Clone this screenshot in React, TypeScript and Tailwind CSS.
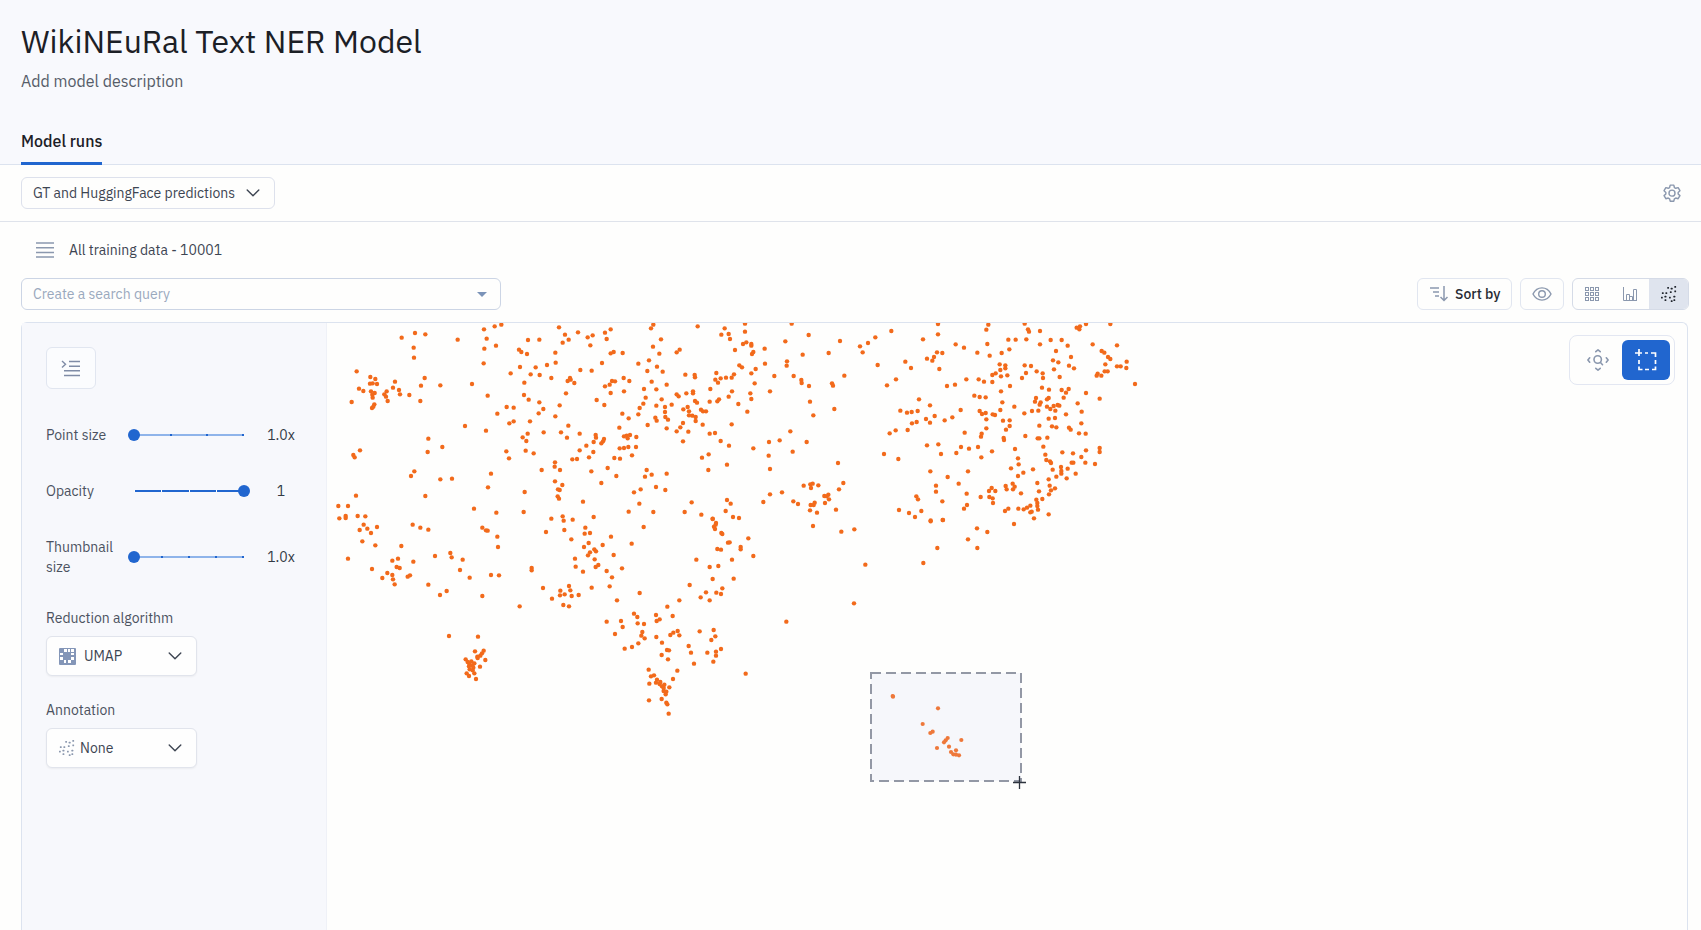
import { useState } from "react";
import type { ReactNode } from "react";

type Tile = { x: number; y: number; pts: number[][] };

// embedding points, stored per tile. one unit in pts is a third of a pixel
const tiles: Tile[] = [
  {
    x: 308, y: -3,
    pts: [
      [215,53],[255,39],[286,43],[383,59],[251,83],[252,113],[462,28],[494,19],[514,14],[470,56],[498,77],[463,86],[461,130],[594,60],[628,59],[687,22],[705,44],[698,68],[716,59],[744,37],[773,52],[788,46],[781,76],[567,89],[574,96],[591,102],[676,98],[677,128],[651,135],[570,141],[617,142],[542,160],[602,163],[629,165],[664,174],[751,150],[785,152],[720,174],[713,183],[722,179],[733,189],[583,188],[708,220],[582,225],[596,239],[628,247],[689,256],[800,240],
      [80,154],[121,171],[136,177],[120,191],[128,190],[141,192],[87,206],[100,213],[123,214],[134,219],[127,224],[128,233],[65,246],[133,253],[126,264],[130,260],[195,185],[189,203],[207,210],[170,214],[163,223],[168,230],[173,243],[210,223],[238,225],[284,174],[273,197],[331,196],[271,243],[426,192],[473,227],
      [530,261],[551,263],[502,281],[640,267],[626,280],[538,310],[551,304],[600,304],[676,289],[405,318],[468,332],[593,341],[578,352],[589,363],[641,337],[693,337],[715,317],[711,353],[749,341],[797,345],[798,353],[791,366],[769,377],[749,391],[790,396],[777,412],[727,418],[741,417],[529,394],[537,415],[587,392],[611,400],[295,356],[337,381],[293,396],[90,391],[70,405],[74,412],[253,454],[243,468],[331,478],[366,476],[483,461],[474,502],[635,450],[675,427],[674,440],[690,450],[675,484],[697,495],[684,508],[689,510],[683,529],[687,536],[784,454],[759,545],[584,516],[581,576],[432,566],[499,578],[78,527],[286,528],[25,558],[54,558],[28,595],[47,588],[47,594],[83,588],[106,589],[664,596],[698,589],[701,602],[728,599],[791,591],
    ],
  },
  {
    x: 578, y: -3,
    pts: [
      [15,38],[32,28],[20,57],[41,96],[32,100],[68,99],[6,129],[160,14],[153,25],[183,58],[159,80],[178,101],[147,121],[115,131],[142,153],[171,140],[188,155],[293,19],[374,25],[364,44],[386,42],[390,57],[435,11],[435,35],[575,11],[626,45],[556,64],[720,63],[804,69],[780,79],[788,97],[686,99],[608,104],[239,89],[230,97],[405,90],[429,72],[439,67],[454,72],[454,77],[460,96],[456,102],[494,86],[495,131],[561,124],[560,137],[418,136],[426,142],[467,147],[454,160],[464,190],[523,168],[581,168],[604,180],[605,189],[627,198],[733,167],[696,190],[699,197],[256,164],[284,165],[285,172],[349,159],[346,179],[354,188],[362,175],[378,173],[395,173],[402,163],
      [71,174],[88,183],[36,183],[45,184],[29,194],[15,199],[32,219],[72,214],[13,255],[155,185],[200,194],[132,207],[169,208],[137,233],[130,251],[119,264],[115,283],[67,281],[86,295],[58,323],[169,257],[185,238],[215,254],[195,261],[195,276],[196,291],[204,299],[166,293],[170,302],[143,315],[200,325],[230,223],[236,229],[259,220],[279,214],[279,220],[331,207],[396,214],[386,230],[357,238],[352,244],[329,245],[285,243],[291,248],[263,261],[250,268],[267,274],[267,286],[277,287],[287,291],[287,303],[303,269],[309,274],[318,274],[249,309],[241,322],[230,334],[265,335],[308,314],[329,341],[345,339],[395,313],[249,364],[362,363],[387,377],[415,252],[442,275],[451,220],[454,237],[510,214],[630,245],[703,267],[640,286],[571,334],[539,361],[507,366],[506,407],[460,385],[620,366],[578,395],[510,447],
      [12,357],[9,364],[4,370],[72,349],[80,347],[90,345],[83,355],[109,351],[59,385],[72,384],[85,381],[108,381],[96,406],[43,414],[60,416],[23,444],[49,468],[4,489],[140,450],[155,464],[135,470],[200,461],[196,510],[168,501],[122,508],[102,517],[118,551],[86,575],[160,576],[254,576],[275,547],[304,584],[338,596],[306,413],[326,403],[381,434],[325,450],[381,540],[392,551],[377,573],[399,591],[417,594],[490,546],[510,523],[546,517],[580,544],[594,552],[611,497],[631,493],[638,491],[633,504],[655,496],[714,429],[730,489],[717,508],[685,524],[673,528],[680,529],[687,538],[675,549],[644,548],[632,555],[641,555],[630,571],[651,578],[708,569],
    ],
  },
  {
    x: 848, y: -3,
    pts: [
      [16,52],[64,33],[23,135],[51,196],[78,178],[106,125],[123,144],[159,58],[204,12],[204,43],[201,97],[217,99],[192,111],[171,116],[187,122],[208,147],[257,73],[282,83],[322,98],[355,14],[349,29],[352,72],[359,107],[395,99],[418,88],[415,59],[437,59],[469,58],[464,11],[474,28],[477,35],[510,33],[510,73],[542,60],[575,60],[593,77],[558,93],[603,111],[549,121],[565,127],[597,137],[612,145],[552,148],[569,171],[648,12],[630,19],[620,23],[628,28],[721,12],[668,73],[741,76],[695,93],[703,98],[714,111],[721,117],[706,133],[741,139],[752,139],[770,125],[769,144],[704,154],[713,154],[683,161],[680,167],[694,167],[795,192],[689,236],
      [389,133],[406,136],[391,150],[406,145],[377,160],[367,165],[393,169],[412,166],[367,186],[342,185],[326,178],[289,178],[255,194],[231,198],[420,198],[393,214],[313,227],[329,231],[347,232],[397,247],[433,260],[391,270],[464,136],[483,138],[468,159],[456,174],[500,154],[518,160],[519,174],[516,203],[537,209],[575,210],[596,207],[588,218],[581,233],[648,219],[623,250],[635,275],[634,310],[627,340],[647,341],[498,234],[495,245],[512,247],[509,254],[536,234],[531,238],[531,260],[541,267],[551,258],[563,255],[568,257],[556,272],[505,272],[486,273],[463,280],[588,283],[555,294],[536,296],[508,317],[546,319],[559,322],[597,323],[602,329],[503,355],[508,355],[532,353],[466,348],
      [147,238],[180,256],[91,272],[111,278],[125,276],[143,273],[194,288],[168,297],[180,308],[140,306],[126,310],[113,330],[77,331],[59,340],[224,301],[247,292],[272,270],[329,273],[336,282],[347,279],[349,298],[368,283],[375,285],[399,302],[419,301],[419,318],[408,329],[349,325],[335,341],[333,350],[284,338],[401,354],[402,360],[42,402],[85,417],[171,376],[205,373],[213,402],[259,399],[273,381],[297,386],[324,381],[366,394],[334,412],[435,387],[444,415],[446,433],[423,445],[460,458],[444,468],[489,448],[520,380],[526,404],[529,420],[540,424],[543,429],[577,397],[609,400],[648,391],[689,384],[689,396],[634,411],[646,428],[675,432],[605,428],[610,428],[593,446],[617,461],[590,475],[573,441],[574,453],[574,461],[559,470],[548,449],[536,478],[502,489],[539,497],[555,505],[543,511],[537,523],[507,514],[453,520],[428,491],[434,500],[429,508],[407,498],[410,508],[365,504],[357,513],[376,513],[332,531],[358,531],[368,535],[369,549],[290,521],[266,491],[233,471],[181,454],[294,454],[198,497],[198,515],[139,529],[144,538],[217,544],[154,573],[87,570],[117,579],[135,591],[291,555],[282,566],[405,573],[415,566],[445,566],[461,568],[471,563],[481,557],[499,539],[517,537],[502,549],[502,558],[504,569],[481,577],[485,575],[492,595],[536,583],[182,601],[218,600],
    ],
  },
  {
    x: 308, y: 187,
    pts: [
      [101,44],[89,60],[112,56],[141,51],[123,69],[97,94],[136,106],[214,108],[248,44],[271,53],[295,59],[457,53],[468,61],[473,62],[502,80],[504,111],[54,146],[126,177],[187,152],[204,146],[200,171],[209,174],[172,189],[187,195],[189,208],[157,204],[194,223],[250,155],[240,196],[233,200],[295,224],[315,138],[361,129],[365,142],[398,149],[390,180],[419,203],[350,243],[330,255],[483,195],[507,196],[457,258],[569,289],[605,174],[605,181],[639,234],[666,266],[648,66],[703,60],[724,88],[766,53],[764,71],[780,69],[776,99],[762,111],[793,118],[798,124],[780,127],[774,136],[794,148],[735,146],[737,170],[759,185],[797,171],[805,165],[785,233],[717,228],[721,241],[691,242],[690,256],[704,253],[725,258],[746,255],[700,285],[717,289],[357,378],[444,380],
      [461,422],[435,424],[456,430],[451,437],[442,440],[443,444],[466,450],[407,448],[413,456],[424,454],[433,460],[418,462],[427,466],[417,469],[430,473],[450,470],[419,478],[428,481],[410,490],[433,490],[417,498],[438,507],
    ],
  },
  {
    x: 578, y: 187,
    pts: [
      [131,51],[33,80],[8,105],[95,101],[41,135],[20,183],[66,175],[36,202],[29,229],[51,271],[119,249],[338,27],[348,39],[347,44],[342,50],[345,57],[364,69],[367,72],[384,98],[389,97],[352,117],[363,119],[445,85],[422,111],[422,118],[460,138],[396,149],[289,149],[355,168],[329,171],[338,207],[401,206],[269,225],[318,247],[349,248],[367,235],[363,252],[302,262],[329,271],[238,271],[202,290],[102,311],[112,321],[168,315],[179,328],[170,333],[218,318],[20,335],[63,333],[113,340],[132,342],[68,351],[45,372],[127,366],[124,377],[134,385],[115,400],[96,411],[74,416],[169,381],[186,398],[233,363],[220,368],[211,375],[238,376],[299,364],[341,360],[346,379],[334,390],[266,408],[273,428],[322,428],[348,425],[348,437],[363,417],[340,455],[282,461],[201,420],[207,421],[185,435],[204,448],[146,479],[162,496],[153,499],[148,521],[171,509],[168,518],[181,516],[179,522],[193,524],[186,529],[191,534],[208,532],[191,543],[199,545],[197,553],[232,482],[219,507],[185,567],[147,571],[199,578],[202,583],[206,611],[437,491],[559,335],[639,48],[724,65],[763,58],[796,164],[762,280],
    ],
  },
  {
    x: 828, y: 177,
    pts: [[242,64],[279,60],[381,85],[412,96],[354,118],[382,144],[262,144],[220,189],[492,72]],
  },
];

const selectedPts = [[128,588],[129,590],[264,625],[218,672],[248,695],[241,699],[293,714],[287,721],[282,727],[334,720],[297,740],[261,744],[318,751],[303,756],[310,763],[318,764],[327,766]];

const dotGrid = [[8,2],[12,3],[16,1],[11,7],[16,6],[2,8],[6,8],[1,13],[5,12],[10,13],[15,12],[5,16],[12,17],[15,16]];

function Dots({ className }: { className: string }) {
  return (
    <svg width="16" height="16" viewBox="0 0 18 18" className={className} fill="currentColor">
      {dotGrid.map(([x, y], i) => (
        <rect key={i} x={x - 1} y={y - 1} width="2" height="2" rx="0.4" />
      ))}
    </svg>
  );
}

function Chevron() {
  return (
    <svg width="14" height="8" viewBox="0 0 14 8" fill="none" stroke="#3d4552" strokeWidth="1.4" strokeLinecap="round" strokeLinejoin="round">
      <path d="M1.2 1 7 6.8 12.8 1" />
    </svg>
  );
}

type SliderProps = {
  id: string;
  label: string;
  value: number;
  min: number;
  max: number;
  steps: number;
  text: string;
  filled?: boolean;
  onChange: (v: number) => void;
};

function Slider({ id, label, value, min, max, steps, text, filled, onChange }: SliderProps) {
  return (
    <div className="flex items-center">
      <label htmlFor={id} className="w-[82px] pr-2 leading-5">{label}</label>
      <div className="grid w-[122px] items-center">
        <div className={filled ? "mx-1.5 flex h-0.5 justify-between bg-[#2166cf] [grid-area:1/1]" : "mx-1.5 flex h-0.5 justify-between bg-[#8fb4ea] [grid-area:1/1]"}>
          {Array.from({ length: steps + 1 }, (_, i) => (
            <span key={i} className={filled ? "h-0.5 w-px bg-white" : "h-0.5 w-0.5 bg-[#2166cf]"} />
          ))}
        </div>
        <input
          id={id}
          type="range"
          min={min}
          max={max}
          step="any"
          value={value}
          onChange={(e) => onChange(Number(e.target.value))}
          className="h-3 w-full cursor-pointer appearance-none bg-transparent [grid-area:1/1] [&::-webkit-slider-thumb]:h-3 [&::-webkit-slider-thumb]:w-3 [&::-webkit-slider-thumb]:appearance-none [&::-webkit-slider-thumb]:rounded-full [&::-webkit-slider-thumb]:bg-[#2166cf]"
        />
      </div>
      <output htmlFor={id} className="w-[62px] text-center text-[#333a45]">{text}</output>
    </div>
  );
}

function PanelSelect({ id, label, icon, options, pad }: { id: string; label: string; icon: ReactNode; options: string[]; pad: string }) {
  return (
    <div>
      <label htmlFor={id} className="block leading-5">{label}</label>
      <div className="mt-2 grid h-10 w-[151px] items-center rounded-md border border-[#e1e4ec] bg-[#fefefe] shadow-xs">
        <select id={id} className={`h-full w-full appearance-none bg-transparent text-[#3d4552] outline-none [grid-area:1/1] ${pad}`}>
          {options.map((o) => <option key={o}>{o}</option>)}
        </select>
        <span className="pointer-events-none flex items-center justify-between pr-[14px] pl-3 [grid-area:1/1]">
          {icon}
          <Chevron />
        </span>
      </div>
    </div>
  );
}

function Scatter() {
  return (
    <svg className="absolute inset-0 h-full w-full" aria-label="Embedding projection">
      <g fill="#f26a1b">
        {tiles.map((t) =>
          t.pts.map(([x, y], i) => (
            <circle key={`${t.x}-${t.y}-${i}`} cx={t.x + x / 3} cy={t.y + y / 3} r="2.2" />
          ))
        )}
      </g>
      <rect x="849" y="350" width="150" height="108" fill="#f6f7fb" stroke="#9398a5" strokeWidth="2" strokeDasharray="10 5" />
      <g fill="#ee783a">
        {selectedPts.map(([x, y], i) => (
          <circle key={i} cx={828 + x / 3} cy={177 + y / 3} r="2.1" />
        ))}
      </g>
      <path d="M991 459.5h13M997.5 453v13" stroke="#2d333d" strokeWidth="1.3" />
    </svg>
  );
}

export default function App() {
  const [pointSize, setPointSize] = useState(1);
  const [opacity, setOpacity] = useState(1);
  const [thumbSize, setThumbSize] = useState(1);

  return (
    <div className="flex min-h-screen flex-col bg-[#fefefd] font-['IBM_Plex_Sans','Noto_Sans',sans-serif] text-sm text-[#4b5260]">
      <header className="border-b border-[#dce3ef] bg-[#f8f9fd] px-[21px] pt-[21px]">
        <h1 className="text-[32px] leading-10 text-[#1c2026]">WikiNEuRal Text NER Model</h1>
        <p className="mt-2 text-base leading-6 text-[#565d69]">Add model description</p>
        <nav className="mt-9 flex">
          <a href="#runs" className="-mb-px border-b-3 border-[#2166cf] pb-[9px] text-base leading-6 font-medium text-[#1c2026]">Model runs</a>
        </nav>
      </header>

      <div className="flex items-center justify-between border-b border-[#dfe3eb] py-3 pr-[19px] pl-[21px]">
        <div className="grid h-8 items-center rounded-md border border-[#dde1ec]">
          <select aria-label="Model run" className="h-full w-[252px] appearance-none bg-transparent pl-[11px] text-[#3d4552] outline-none [grid-area:1/1]">
            <option>GT and HuggingFace predictions</option>
          </select>
          <span className="pointer-events-none justify-self-end pr-[14px] [grid-area:1/1]"><Chevron /></span>
        </div>
        <button aria-label="Settings" className="p-px">
          <svg width="18" height="18" viewBox="0 0 24 24" fill="none" stroke="#8b98ae" strokeWidth="1.9" strokeLinejoin="round">
            <path d="M9.6 1.5h4.8l.8 3.2 1.8 1 3.2-.9 2.4 4.1-2.4 2.3v2l2.4 2.3-2.4 4.1-3.2-.9-1.8 1-.8 3.2H9.6l-.8-3.2-1.8-1-3.2.9-2.4-4.1 2.4-2.3v-2L1.4 8.900l2.4-4.100 3.2.9 1.8-1z" />
            <circle cx="12" cy="12.2" r="4" />
          </svg>
        </button>
      </div>

      <div className="flex items-center gap-[15px] px-9 pt-[18px]">
        <svg width="18" height="16" viewBox="0 0 18 16" stroke="#8b98ae" strokeWidth="1.5">
          <path d="M0 1h18M0 5.700h18M0 10.400h18M0 15h18" />
        </svg>
        <span className="leading-5 text-[#3d4552]">All training data - 10001</span>
      </div>

      <div className="mt-[18px] flex items-center justify-between pr-3 pl-[21px]">
        <div className="flex h-8 w-[480px] items-center rounded-md border border-[#ccd5e5] pr-[13px] pl-[11px]">
          <input aria-label="Search query" placeholder="Create a search query" className="min-w-0 flex-1 bg-transparent outline-none placeholder:text-[#9aa9bd]" />
          <svg width="10" height="5" viewBox="0 0 10 5" fill="#7b93b8"><path d="M0 0h10L5 5z" /></svg>
        </div>
        <div className="flex gap-2">
          <button className="flex h-8 w-[95px] items-center gap-[7px] rounded-md border border-[#e1e6f0] pl-3 font-medium text-[#262b33]">
            <svg width="18" height="16" viewBox="0 0 18 16" fill="none" stroke="#8b98ae" strokeWidth="1.5">
              <path d="M0 2h9M3 6h6M5 10h4M14 0v14M10.500 11l3.500 3.500 3.500-3.500" />
            </svg>
            Sort by
          </button>
          <button aria-label="Visibility" className="flex h-8 w-11 items-center justify-center rounded-md border border-[#e1e6f0]">
            <svg width="20" height="14" viewBox="0 0 20 14" fill="none" stroke="#8b98ae" strokeWidth="1.4">
              <path d="M1 7C3 3 6.200.9 10 .9S17 3 19 7c-2 4-5.200 6.100-9 6.100S3 11 1 7z" />
              <circle cx="10" cy="7" r="3.3" />
            </svg>
          </button>
          <div className="flex h-8 overflow-hidden rounded-md border border-[#d5dbe7]">
            <button aria-label="Grid view" className="flex w-[38px] items-center justify-center">
              <svg width="15" height="15" viewBox="0 0 15 15" fill="none" stroke="#8b98ae">
                {[0, 1, 2].map((r) => [0, 1, 2].map((c) => (
                  <rect key={`${r}${c}`} x={0.5 + c * 5} y={0.5 + r * 5} width="3" height="3" />
                )))}
              </svg>
            </button>
            <button aria-label="Chart view" className="flex w-[38px] items-center justify-center">
              <svg width="14" height="14" viewBox="0 0 14 14" fill="none" stroke="#8b98ae">
                <path d="M.5 0v13.500H14M3.500 13V7.500h3V13M6.500 13V9.500h3V13M10.500 13V2.500h3V13" />
              </svg>
            </button>
            <button aria-label="Projection view" className="flex w-[39px] items-center justify-center bg-[#dfe4ee]">
              <Dots className="text-[#20252d]" />
            </button>
          </div>
        </div>
      </div>

      <main className="relative mt-3 mr-[13px] ml-[21px] flex flex-1 rounded-t-md border border-b-0 border-[#dce3ef]">
        <Scatter />
        <aside className="relative w-[305px] border-r border-[#eff1f7] bg-[#f7f8fc] pt-6 pl-6">
          <button aria-label="Collapse panel" className="flex h-[42px] w-[50px] items-center justify-center rounded-md border border-[#e1e6f0] bg-[#fbfcfe]">
            <svg width="20" height="17" viewBox="0 0 20 17" fill="none" stroke="#7f8ba6" strokeWidth="1.4">
              <path d="M8 1.500h11M8 6.200h11M3 10.800h16M3 15.500h16" />
              <path d="m1 1 3.500 3.200L1 7.400" />
            </svg>
          </button>
          <div className="mt-9 flex flex-col gap-9">
            <Slider id="point" label="Point size" min={1} max={4} steps={3} value={pointSize} text={`${pointSize.toFixed(1)}x`} onChange={setPointSize} />
            <Slider id="opacity" label="Opacity" min={0} max={1} steps={4} filled value={opacity} text={String(opacity)} onChange={setOpacity} />
            <Slider id="thumb" label="Thumbnail size" min={1} max={5} steps={4} value={thumbSize} text={`${thumbSize.toFixed(1)}x`} onChange={setThumbSize} />
          </div>
          <div className="mt-[31px] flex flex-col gap-6">
            <PanelSelect
              id="algo"
              label="Reduction algorithm"
              options={["UMAP", "t-SNE", "PCA"]}
              pad="pl-[37px]"
              icon={
                <svg width="17" height="17" viewBox="0 0 17 17">
                  <rect width="17" height="17" rx="1" fill="#8496b8" />
                  <path d="M5 1h3v3H5zM9 1h2v3H9zM12 1h3v3h-3zM1 5h3v2H1zM12 5h3v2h-3zM1 9h3v3H1zM12 9h3v3h-3zM5 12h2v3H5zM9 12h3v3H9z" fill="#fff" />
                </svg>
              }
            />
            <PanelSelect id="annotation" label="Annotation" options={["None"]} pad="pl-[33px]" icon={<Dots className="text-[#8b98ae]" />} />
          </div>
        </aside>
        <div className="absolute top-3 right-3 flex h-[50px] w-[106px] items-center rounded-lg border border-[#e3e7f2] p-1">
          <button aria-label="Pan and zoom" className="flex h-10 flex-1 items-center justify-center">
            <svg width="22" height="22" viewBox="0 0 22 22" fill="none" stroke="#8b98ae" strokeWidth="1.6" strokeLinecap="round" strokeLinejoin="round">
              <circle cx="10.7" cy="10.5" r="3.7" />
              <path d="m13.500 13.500 2 2.200M8.800 2.700 11 .9l2.200 1.800M8.800 19.300l2.200 1.800 2.200-1.800M2.700 8.800.9 11l1.800 2.200M19.300 8.800l1.800 2.200-1.800 2.200" />
            </svg>
          </button>
          <button aria-label="Box select" className="flex h-10 w-12 items-center justify-center rounded-md bg-[#2166cf]">
            <svg width="22" height="22" viewBox="0 0 22 22" fill="none" stroke="#fff" strokeWidth="1.7">
              <path d="M0 4h7M4 0v7M10 4h3M16 4h4.500v4M20.500 11v4M20.500 17.500v3H17M14 20.500h-4M7.500 20.500H4v-3M4 15v-4" />
            </svg>
          </button>
        </div>
      </main>
    </div>
  );
}
